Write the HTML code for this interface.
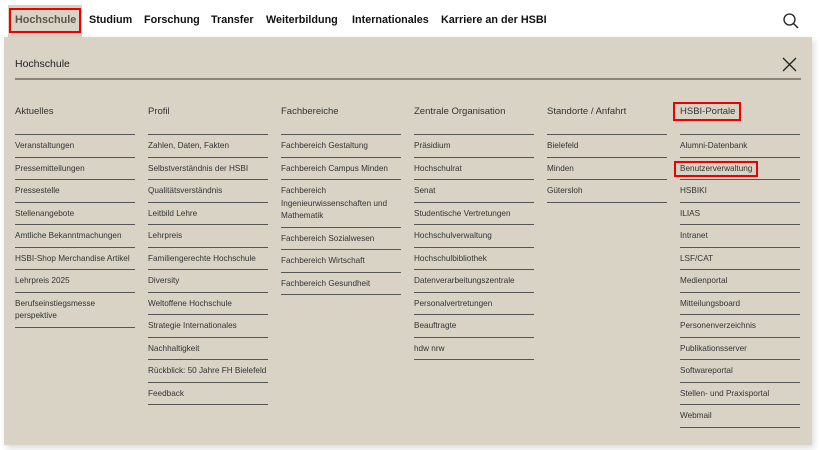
<!DOCTYPE html>
<html><head><meta charset="utf-8"><style>
*{margin:0;padding:0;box-sizing:border-box}
body{width:820px;height:450px;background:#fff;font-family:"Liberation Sans",sans-serif;position:relative;overflow:hidden}
.nav{position:absolute;top:0;left:0;width:820px;height:37px}
.nav span{position:absolute;top:14px;font-size:10.8px;font-weight:bold;color:#111}
.hs{position:absolute;left:8px;top:5px;width:74px;height:33px;background:#d8d3c5}
.red{position:absolute;border:2px solid #e00}
.panel{position:absolute;left:4px;top:37px;width:808px;height:408px;background:#d8d3c5;box-shadow:2px 3px 6px rgba(0,0,0,.15)}
.title{position:absolute;left:15px;top:58px;font-size:10.5px;color:#222}
.tline{position:absolute;left:15px;top:78px;width:786px;height:2px;background:#8a8578}
.col{position:absolute;top:105px;width:120px}
.col h3{font-size:9.5px;font-weight:normal;color:#333;height:30px;padding-top:1px;line-height:12px;border-bottom:1px solid #555}
.col div{font-size:8.2px;color:#333;line-height:12.5px;padding:5px 0 4px;border-bottom:1px solid #555}
</style></head><body>
<div class="nav">
<div class="hs"></div>
<span style="left:15px;color:#5b5448">Hochschule</span>
<span style="left:89px">Studium</span>
<span style="left:144px">Forschung</span>
<span style="left:211px">Transfer</span>
<span style="left:266px">Weiterbildung</span>
<span style="left:352px">Internationales</span>
<span style="left:441px">Karriere an der HSBI</span>
<svg style="position:absolute;left:782px;top:12px" width="18" height="18" viewBox="0 0 18 18"><circle cx="7.5" cy="7.5" r="5.5" fill="none" stroke="#222" stroke-width="1.3"/><path d="M11.5 11.5L16 16" stroke="#222" stroke-width="1.4"/></svg>
</div>
<div class="red" style="left:9px;top:8px;width:72px;height:25px"></div>
<div class="panel"></div>
<div class="title">Hochschule</div>
<svg style="position:absolute;left:782px;top:57px" width="15" height="15" viewBox="0 0 15 15"><path d="M1 1L14 14M14 1L1 14" stroke="#222" stroke-width="1.3"/></svg>
<div class="tline"></div>

<div class="col" style="left:15px"><h3>Aktuelles</h3>
<div>Veranstaltungen</div><div>Pressemitteilungen</div><div>Pressestelle</div><div>Stellenangebote</div><div>Amtliche Bekanntmachungen</div><div>HSBI-Shop Merchandise Artikel</div><div>Lehrpreis 2025</div><div>Berufseinstiegsmesse perspektive</div></div>

<div class="col" style="left:148px"><h3>Profil</h3>
<div>Zahlen, Daten, Fakten</div><div>Selbstverständnis der HSBI</div><div>Qualitätsverständnis</div><div>Leitbild Lehre</div><div>Lehrpreis</div><div>Familiengerechte Hochschule</div><div>Diversity</div><div>Weltoffene Hochschule</div><div>Strategie Internationales</div><div>Nachhaltigkeit</div><div>Rückblick: 50 Jahre FH Bielefeld</div><div>Feedback</div></div>

<div class="col" style="left:281px"><h3>Fachbereiche</h3>
<div>Fachbereich Gestaltung</div><div>Fachbereich Campus Minden</div><div>Fachbereich Ingenieurwissenschaften und Mathematik</div><div>Fachbereich Sozialwesen</div><div>Fachbereich Wirtschaft</div><div>Fachbereich Gesundheit</div></div>

<div class="col" style="left:414px"><h3>Zentrale Organisation</h3>
<div>Präsidium</div><div>Hochschulrat</div><div>Senat</div><div>Studentische Vertretungen</div><div>Hochschulverwaltung</div><div>Hochschulbibliothek</div><div>Datenverarbeitungszentrale</div><div>Personalvertretungen</div><div>Beauftragte</div><div>hdw nrw</div></div>

<div class="col" style="left:547px"><h3>Standorte / Anfahrt</h3>
<div>Bielefeld</div><div>Minden</div><div>Gütersloh</div></div>

<div class="col" style="left:680px"><h3>HSBI-Portale</h3>
<div>Alumni-Datenbank</div><div>Benutzerverwaltung</div><div>HSBIKI</div><div>ILIAS</div><div>Intranet</div><div>LSF/CAT</div><div>Medienportal</div><div>Mitteilungsboard</div><div>Personenverzeichnis</div><div>Publikationsserver</div><div>Softwareportal</div><div>Stellen- und Praxisportal</div><div>Webmail</div></div>

<div class="red" style="left:673px;top:102px;width:68px;height:19px"></div>
<div class="red" style="left:674px;top:161px;width:84px;height:16px"></div>
</body></html>
